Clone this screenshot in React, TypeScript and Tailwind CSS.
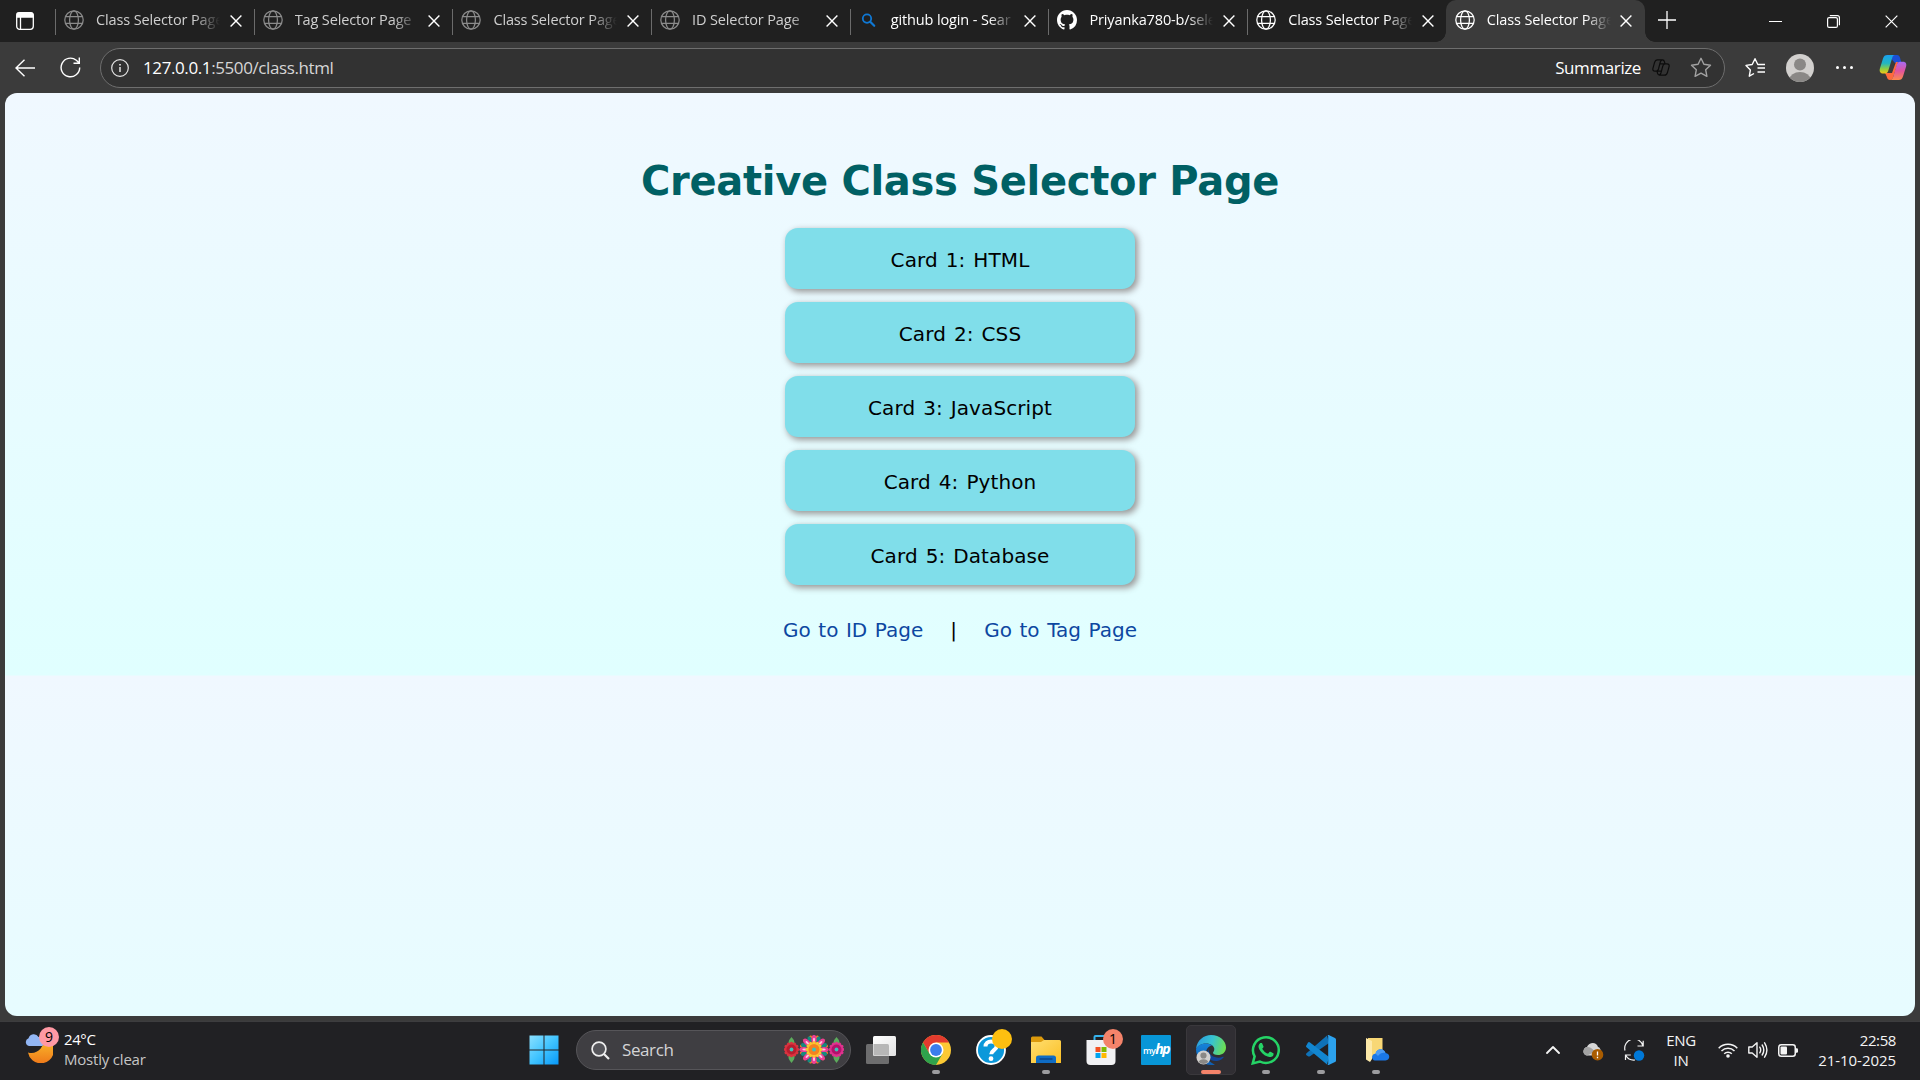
import React from "react";

const SEGOE = "font-['Open_Sans','Noto_Sans',sans-serif]";
const VERDANA = "font-['DejaVu_Sans',sans-serif]";

type IconProps = { className?: string };

const Globe = ({ className = "" }: IconProps) => (
  <svg width="20" height="20" viewBox="0 0 20 20" fill="none" stroke="currentColor" strokeWidth="1.25" className={className}>
    <circle cx="10" cy="10" r="9.2" />
    <ellipse cx="10" cy="10" rx="4.4" ry="9.2" />
    <path d="M1.6 6.6h16.8M1.6 13.4h16.8" />
  </svg>
);

const SearchBlue = () => (
  <svg width="20" height="20" viewBox="0 0 20 20" fill="none" stroke="#0f78d4" strokeLinecap="round">
    <circle cx="8" cy="8.6" r="4.2" strokeWidth="1.8" />
    <path d="M11.2 11.800l4 4" strokeWidth="2.2" />
  </svg>
);

const Github = () => (
  <svg width="20" height="20" viewBox="0 0 16 16" fill="#fff">
    <path d="M8 0C3.58 0 0 3.58 0 8c0 3.54 2.29 6.53 5.47 7.59.4.07.55-.17.55-.38 0-.19-.01-.82-.01-1.49-2.01.37-2.53-.49-2.69-.94-.09-.23-.48-.94-.82-1.13-.28-.15-.68-.52-.01-.53.63-.01 1.08.58 1.23.82.72 1.21 1.87.87 2.33.66.07-.52.28-.87.51-1.07-1.78-.2-3.64-.89-3.64-3.95 0-.87.31-1.59.82-2.15-.08-.2-.36-1.02.08-2.12 0 0 .67-.21 2.2.82.64-.18 1.32-.27 2-.27s1.36.09 2 .27c1.53-1.04 2.2-.82 2.2-.82.44 1.1.16 1.92.08 2.12.51.56.82 1.27.82 2.15 0 3.07-1.87 3.75-3.65 3.95.29.25.54.73.54 1.48 0 1.07-.01 1.93-.01 2.2 0 .21.15.46.55.38A8.01 8.01 0 0 0 16 8c0-4.42-3.58-8-8-8z" />
  </svg>
);

const Cross = ({ size = 12, w = 1.4 }: { size?: number; w?: number }) => (
  <svg width={size} height={size} viewBox="0 0 12 12" fill="none" stroke="#fff" strokeWidth={w}>
    <path d="M.6.6l10.8 10.8M11.4.6L.6 11.4" />
  </svg>
);

type TabInfo = { title: string; kind: "globe" | "search" | "github"; dim?: boolean; active?: boolean };

const tabs: TabInfo[] = [
  { title: "Class Selector Page", kind: "globe", dim: true },
  { title: "Tag Selector Page", kind: "globe", dim: true },
  { title: "Class Selector Page", kind: "globe", dim: true },
  { title: "ID Selector Page", kind: "globe", dim: true },
  { title: "github login - Sear", kind: "search" },
  { title: "Priyanka780-b/sele", kind: "github" },
  { title: "Class Selector Page", kind: "globe" },
  { title: "Class Selector Page", kind: "globe", active: true },
];

const Tab = ({ tab }: { tab: TabInfo }) => (
  <div
    className={`relative flex h-[42px] w-[198.700px] shrink-0 items-center ${tab.active ? "rounded-t-[10px] bg-[#3b3b3b]" : ""}`}
  >
    {!tab.active && <span className="absolute left-0 top-[9px] h-[26px] w-px bg-[#6b6b6b]" />}
    {tab.active && (
      <>
        <span className="absolute bottom-0 -left-[10px] size-[10px] bg-[radial-gradient(circle_at_0_0,transparent_9.5px,#3b3b3b_10px)]" />
        <span className="absolute bottom-0 -right-[10px] size-[10px] bg-[radial-gradient(circle_at_100%_0,transparent_9.5px,#3b3b3b_10px)]" />
      </>
    )}
    <span className="ml-[9px] -mt-[2px] w-5 shrink-0">
      {tab.kind === "globe" && <Globe className={tab.dim ? "text-[#8b8b8b]" : "text-white"} />}
      {tab.kind === "search" && <SearchBlue />}
      {tab.kind === "github" && <Github />}
    </span>
    <span
      className={`ml-[12px] -mt-[3px] w-[124px] overflow-hidden whitespace-nowrap text-[14.5px] leading-5 tracking-[-0.13px] [mask-image:linear-gradient(90deg,#000_98px,transparent_124px)] ${tab.dim ? "text-[#cfcfcf]" : "text-white"}`}
    >
      {tab.title}
    </span>
    <span className="ml-[9.5px]">
      <Cross />
    </span>
  </div>
);

const CopilotColor = () => (
  <svg width="28" height="27" viewBox="0 0 28 27">
    <defs>
      <linearGradient id="cpA" x1="0" y1="0" x2="0" y2="1">
        <stop offset="0" stopColor="#1aa0f0" />
        <stop offset=".45" stopColor="#22b6c0" />
        <stop offset=".75" stopColor="#8fce3f" />
        <stop offset="1" stopColor="#f5c516" />
      </linearGradient>
      <linearGradient id="cpB" x1="0" y1="0" x2="0" y2="1">
        <stop offset="0" stopColor="#a76bf5" />
        <stop offset=".5" stopColor="#e0539f" />
        <stop offset="1" stopColor="#ff8a4c" />
      </linearGradient>
    </defs>
    <path d="M9 1h9c2 0 2.600 1.500 3.200 3.500L22.500 9H16z" fill="#1b4fd6" />
    <path d="M6 19h7l4-11 2 0-4.500 14c-.8 2.600-1.600 4-3.500 4-2 0-2.800-1.500-3.300-3.500z" fill="#ff6a3c" />
    <path d="M8.500 1H16c-1.500 0-2.300 1.200-2.900 3.200L9.500 16c-.6 2-1.300 3.500-3.500 3.500H4C1 19.500.2 17 .9 14.500L4 4.500C4.800 2 6 1 8.500 1z" fill="url(#cpA)" />
    <path d="M19.500 26H11c1.700 0 2.600-1.200 3.200-3.200L17.700 11c.6-2 1.300-3.300 3.500-3.300H24c3 0 3.800 2.300 3.100 4.800L24 22.500c-.8 2.500-2 3.500-4.500 3.500z" fill="url(#cpB)" />
  </svg>
);

const Toolbar = () => (
  <div className="flex h-[51px] items-center bg-[#3b3b3b]">
    <svg className="ml-[15px]" width="20" height="18" viewBox="0 0 20 18" fill="none" stroke="#fff" strokeWidth="1.4">
      <path d="M9.500.8L1 9l8.500 8.200M1 9h19" />
    </svg>
    <svg className="ml-[24.500px]" width="21" height="21" viewBox="0 0 21 21" fill="none" stroke="#fff" strokeWidth="1.4">
      <path d="M19.700 10.500a9.300 9.300 0 1 1-3.400-7.200L19 5.800M19.300.5v5.700h-5.800" />
    </svg>
    <div className="ml-[19.500px] flex h-10 w-[1625px] items-center rounded-full border border-[#6e6e6e] bg-[#323232]">
      <svg className="ml-[10px]" width="18" height="18" viewBox="0 0 18 18" fill="none" stroke="#e4e4e4" strokeWidth="1.200">
        <circle cx="9" cy="9" r="8.300" />
        <path d="M9 8v5" strokeWidth="1.500" />
        <path d="M9 5v1.600" strokeWidth="1.700" />
      </svg>
      <span className="ml-[14px] whitespace-nowrap text-[17px] leading-6 tracking-[-0.4px] text-[#d6d6d6]">
        <span className="text-white">127.0.0.1</span>:5500/class.html
      </span>
      <span className="ml-auto text-[17px] leading-6 tracking-[-0.4px] text-white">Summarize</span>
      <svg className="ml-[11px]" width="18" height="17" viewBox="0 0 18 17" fill="none" stroke="#0c0c0c" strokeWidth="1.200">
        <path d="M5.500.8h5c1.400 0 1.700.8 2 2l.5 2h2c1.800 0 2.500 1.300 2 3l-1.500 5.500c-.5 1.800-1.300 2.900-3 2.900h-5c-1.400 0-1.700-.8-2-2l-.5-2H3c-1.800 0-2.500-1.300-2-3l1.500-5.500C3 1.900 3.800.8 5.500.8zM10.500.8c-1.400 0-1.800.9-2.200 2.200L6.500 10c-.4 1.300-.9 2.200-2.200 2.200M13 4.800c-1.400 0-1.900.9-2.200 2.200l-1.900 7c-.4 1.300-.9 2.200-2.200 2.200M8 4.800h5M5 12.200h5" />
      </svg>
      <svg className="ml-[20px] mr-[12px]" width="22" height="21" viewBox="0 0 22 21" fill="none" stroke="#a2a2a2" strokeWidth="1.400" strokeLinejoin="round">
        <path d="M11 1.300l2.900 6 6.600.9-4.800 4.600 1.200 6.500-5.900-3.100-5.900 3.100 1.200-6.500L1.500 8.200l6.600-.9z" />
      </svg>
    </div>
    <svg className="ml-[20px]" width="21" height="21" viewBox="0 0 21 21" fill="none" stroke="#fff" strokeWidth="1.400" strokeLinejoin="round">
      <path d="M9 16.500l-4.700 2.700 1.100-6.300L1 8.400l6.200-.9L10 1.700l2.800 5.800H20M12.500 11H20M12.500 15H20" />
    </svg>
    <svg className="ml-[20px]" width="28" height="28" viewBox="0 0 28 28">
      <defs>
        <clipPath id="avatar"><circle cx="14" cy="14" r="14" /></clipPath>
      </defs>
      <g clipPath="url(#avatar)">
        <rect width="28" height="28" fill="#d2d0ce" />
        <circle cx="14" cy="10.500" r="6" fill="#8a8886" />
        <ellipse cx="14" cy="25.500" rx="10.500" ry="7.500" fill="#8a8886" />
      </g>
    </svg>
    <span className="ml-[22px] flex gap-[4px]">
      <i className="size-[3px] rounded-full bg-white" />
      <i className="size-[3px] rounded-full bg-white" />
      <i className="size-[3px] rounded-full bg-white" />
    </span>
    <span className="ml-[26px]"><CopilotColor /></span>
  </div>
);

const cards = ["Card 1: HTML", "Card 2: CSS", "Card 3: JavaScript", "Card 4: Python", "Card 5: Database"];

const Page = () => (
  <div className={`mx-[5px] h-[923px] overflow-hidden rounded-xl bg-[linear-gradient(#f0f8ff,#e0ffff)] bg-[length:100%_582.500px] text-center ${VERDANA}`}>
    <h1 className="pt-[64px] text-[40px] font-bold leading-[49px] tracking-[-0.300px] text-[#006064]">Creative Class Selector Page</h1>
    <div className="mt-[22px] flex flex-col items-center gap-[13px]">
      {cards.map((c) => (
        <div key={c} className="flex h-[61px] w-[350px] items-center justify-center rounded-[13px] bg-[#80deea] pt-[2px] text-[20px] tracking-[0.100px] text-black [word-spacing:1.500px] shadow-[2.500px_2.500px_6px_#999]">
          {c}
        </div>
      ))}
    </div>
    <div className="mt-[33px] flex justify-center text-[20px] leading-6 text-[#0d47a1] [word-spacing:1.200px]">
      <a>Go to ID Page</a>
      <span className="w-[61px] text-black">|</span>
      <a>Go to Tag Page</a>
    </div>
  </div>
);

const Weather = () => (
  <div className="flex w-[528px] items-start">
    <div className="relative ml-[25px] mt-[13px] h-[30px] w-[34px]">
      <svg width="28" height="29" viewBox="0 0 28 29">
        <defs>
          <linearGradient id="moon" x1="0" y1="0" x2="0" y2="1">
            <stop offset="0" stopColor="#fbc02d" />
            <stop offset="1" stopColor="#ef7a1a" />
          </linearGradient>
        </defs>
        <path d="M20 4a13 13 0 1 1-17 14.500C12 21 19 14 19 4z" fill="url(#moon)" />
        <path d="M4 12a4 4 0 0 1-.5-7.700A5.500 5.500 0 0 1 13.500 3 4.600 4.600 0 0 1 17 12z" fill="#92b6f4" />
      </svg>
      <span className="absolute -top-[7px] left-[14px] flex size-5 items-center justify-center rounded-full bg-[#ff99a4] text-[14px] leading-none text-black">9</span>
    </div>
    <div className="ml-[5px] mt-[8px] text-[15px] leading-5">
      <div className="tracking-[-0.4px] text-white">24°C</div>
      <div className="tracking-[-0.200px] text-[#c6c6c6]">Mostly clear</div>
    </div>
  </div>
);

const petals = (n: number, cx: number, cy: number, r: number, rx: number, ry: number, fill: string, off = 0) =>
  Array.from({ length: n }, (_, i) => (
    <ellipse key={`${fill}${r}${i}`} cx={cx} cy={cy - r} rx={rx} ry={ry} fill={fill} transform={`rotate(${(360 / n) * i + off} ${cx} ${cy})`} />
  ));

const Flowers = () => (
  <svg width="60" height="30" viewBox="0 0 60 30">
    <path d="M7.500 2q5 5 2 11h-4q-3-6 2-11zM7.500 28q5-5 2-11h-4q-3 6 2 11zM52.500 2q5 5 2 11h-4q-3-6 2-11zM52.500 28q5-5 2-11h-4q-3 6 2 11z" fill="#5cab5c" />
    {petals(12, 7.5, 14.5, 5.2, 1.9, 2.600, "#d8333f")}
    <circle cx="7.500" cy="14.500" r="5" fill="#b71c2e" />
    {petals(12, 52.5, 14.5, 5.2, 1.9, 2.600, "#e0328f")}
    <circle cx="52.500" cy="14.500" r="5" fill="#b3126b" />
    {petals(12, 30, 14.5, 13, 1.500, 1.500, "#f47b20", 15)}
    {petals(8, 30, 14.5, 11, 2, 3, "#158a80", 22.5)}
    {petals(8, 30, 14.5, 10, 2.6, 4.600, "#ec3f96")}
    {petals(8, 30, 14.5, 9.500, 1, 2.200, "#ffc5df")}
    {petals(12, 30, 14.5, 5.800, 1.900, 2.700, "#fbc62f")}
    <circle cx="30" cy="14.500" r="5.500" fill="#f58220" />
    <circle cx="7.500" cy="14.500" r="1.900" fill="#3fc1b8" />
    <circle cx="30" cy="14.500" r="2" fill="#3fc1b8" />
    <circle cx="52.500" cy="14.500" r="1.900" fill="#3fc1b8" />
  </svg>
);

const Slot = ({ children, dot, active }: { children: React.ReactNode; dot?: boolean; active?: boolean }) => (
  <div className="relative flex h-full w-[55px] items-center justify-center">
    {active && <span className="absolute inset-x-[2.500px] top-[4px] h-[50px] rounded-[5px] border border-[#3a383c] bg-[#302e33]" />}
    <span className="relative -mt-[1px]">{children}</span>
    {dot && <span className="absolute bottom-[5px] h-[4px] w-2 rounded-full bg-[#9c9c9f]" />}
    {active && <span className="absolute bottom-[5px] h-[4px] w-5 rounded-full bg-[#f4836a]" />}
  </div>
);

const WinLogo = () => (
  <svg width="30" height="30" viewBox="0 0 30 30">
    <defs>
      <linearGradient id="win" x1="0" y1="0" x2="1" y2="1" gradientUnits="objectBoundingBox">
        <stop offset="0" stopColor="#8be0ff" />
        <stop offset=".5" stopColor="#41c4ff" />
        <stop offset="1" stopColor="#0798f8" />
      </linearGradient>
    </defs>
    <path d="M.5.5h14v14H.5zM15.500.5h14v14h-14zM.5 15.500h14v14H.5zM15.500 15.500h14v14h-14z" fill="url(#win)" />
  </svg>
);

const TaskView = () => (
  <svg width="30" height="28" viewBox="0 0 30 28">
    <defs>
      <linearGradient id="tv" x1="0" y1="0" x2="1" y2="1">
        <stop offset="0" stopColor="#fff" />
        <stop offset="1" stopColor="#e2e2e2" />
      </linearGradient>
    </defs>
    <rect x="0" y="8" width="23" height="20" rx="1.500" fill="#6d6d6e" />
    <rect x="7" y="0" width="23" height="20" rx="1.500" fill="url(#tv)" />
    <path d="M7.500 8H21.500q1.500 0 1.500 1.500V19.500H8.500q-1 0-1-1z" fill="#b7b7b7" />
  </svg>
);

const Chrome = () => (
  <svg width="30" height="30" viewBox="0 0 30 30">
    <circle cx="15" cy="15" r="15" fill="#fcc934" />
    <path d="M15 7.500H28A15 15 0 0 0 2 7.500L8.500 18.750z" fill="#e33b2e" />
    <path d="M2 7.500A15 15 0 0 0 15 30l6.500-11.250H8.500z" fill="#2fa24c" />
    <circle cx="15" cy="15" r="7.500" fill="#fff" />
    <circle cx="15" cy="15" r="5.900" fill="#3b7ded" />
  </svg>
);

const Help = () => (
  <span className="relative block">
    <svg width="30" height="30" viewBox="0 0 30 30">
      <circle cx="15" cy="15" r="14" fill="#0b98da" stroke="#fff" strokeWidth="1.800" />
      <path d="M9.500 11.500c0-3.500 2.500-5 5.500-5s5.700 1.600 5.700 4.500c0 4-5.500 4.200-5.500 8.300" fill="none" stroke="#fff" strokeWidth="4" />
      <circle cx="15" cy="23.700" r="2.400" fill="#fff" />
    </svg>
    <i className="absolute -right-[6px] -top-[6px] size-5 rounded-full bg-[#fdbf10]" />
  </span>
);

const Explorer = () => (
  <svg width="30" height="28" viewBox="0 0 30 28">
    <defs>
      <linearGradient id="fold" x1="0" y1="0" x2="1" y2="1">
        <stop offset="0" stopColor="#ffde70" />
        <stop offset="1" stopColor="#fbbf24" />
      </linearGradient>
    </defs>
    <path d="M0 2q0-1.500 1.500-1.500h9l3 3.500H28v8H0z" fill="#dc9a0c" />
    <path d="M0 6h10l3-2h15.500q1.500 0 1.500 1.500V27H0z" fill="url(#fold)" />
    <path d="M5 27v-5.500Q5 19.500 7.500 19.500h15q2.500 0 2.500 2.500v5z" fill="#0f6cc4" />
    <path d="M8.500 23h13" stroke="#0a3f80" strokeWidth="1.300" />
  </svg>
);

const Store = () => (
  <span className="relative block">
    <svg width="30" height="30" viewBox="0 0 30 30">
      <path d="M8.500 6V2q0-1 1-1h11q1 0 1 1v4" fill="none" stroke="#35b4ee" strokeWidth="2" />
      <path d="M.5 5h29v21q0 4-4 4h-21q-4 0-4-4z" fill="#f1f1f3" />
      <path d="M9.500 12h5v5h-5z" fill="#f25022" />
      <path d="M15.500 12h5v5h-5z" fill="#7fba00" />
      <path d="M9.500 18h5v5h-5z" fill="#00a4ef" />
      <path d="M15.500 18h5v5h-5z" fill="#ffb900" />
    </svg>
    <span className="absolute -right-[7px] -top-[6px] flex size-5 items-center justify-center rounded-full bg-[#f4836a] text-[14px] leading-none text-black">1</span>
  </span>
);

const MyHp = () => (
  <span className="flex size-[30px] items-center justify-center rounded-[1px] bg-[#0896d7] pb-[1px] leading-none text-white">
    <span className="pt-[2px] text-[9px] font-semibold tracking-[-0.600px]">my</span>
    <span className="text-[14px] font-bold italic tracking-[-1.500px]">hp</span>
  </span>
);

const Edge = () => (
  <svg width="30" height="30" viewBox="0 0 30 30">
    <defs>
      <linearGradient id="eg1" x1="0" y1=".4" x2="1" y2=".6">
        <stop offset="0" stopColor="#2a9ee0" />
        <stop offset=".5" stopColor="#38c3d0" />
        <stop offset="1" stopColor="#6fe04c" />
      </linearGradient>
      <linearGradient id="eg2" x1="0" y1="0" x2="0" y2="1">
        <stop offset="0" stopColor="#1583da" />
        <stop offset="1" stopColor="#0f5cb0" />
      </linearGradient>
    </defs>
    <path d="M0 14C1 5 8 0 15 0c9 0 15 6 15 12.500 0 5-4 7.500-8 7.500-3.500 0-5-1.300-5-2.300 0-.8 1.300-1.200 1.300-3.700C18.300 11 15 8.500 10 8.500 5 8.500 1.500 11 0 14z" fill="url(#eg1)" />
    <path d="M0 14C2 10 6 8.500 10 8.500c3 0 5 1 6 2-4 .5-6 4-6 7.500 0 5 4 10 9 11.500-1.200.4-2.500.5-4 .5C6.500 30 0 23 0 14z" fill="url(#eg2)" />
    <path d="M12.500 14c-4 7 2 13 8.500 12 3-.5 5.500-2 6.500-3.500.4-.6 0-1-.6-.7C21 24.500 12.500 21 12.500 14z" fill="#12469a" />
    <circle cx="7.500" cy="22.500" r="7" fill="#d2d0ce" />
    <circle cx="7.500" cy="20.500" r="3.100" fill="#8a8886" />
    <path d="M2.700 27a5 3.800 0 0 1 9.600 0 7 7 0 0 1-9.600 0z" fill="#8a8886" />
  </svg>
);

const WhatsApp = () => (
  <svg width="30" height="30" viewBox="0 0 24 24" fill="#25d366">
    <path d="M17.472 14.382c-.297-.149-1.758-.867-2.030-.967-.273-.099-.471-.148-.670.150-.197.297-.767.966-.940 1.164-.173.199-.347.223-.644.075-.297-.150-1.255-.463-2.390-1.475-.883-.788-1.480-1.761-1.653-2.059-.173-.297-.018-.458.130-.606.134-.133.298-.347.446-.520.149-.174.198-.298.298-.497.099-.198.050-.371-.025-.520-.075-.149-.669-1.612-.916-2.207-.242-.579-.487-.500-.669-.510-.173-.008-.371-.010-.570-.010-.198 0-.520.074-.792.372-.272.297-1.040 1.016-1.040 2.479 0 1.462 1.065 2.875 1.213 3.074.149.198 2.096 3.200 5.077 4.487.709.306 1.262.489 1.694.625.712.227 1.360.195 1.871.118.571-.085 1.758-.719 2.006-1.413.248-.694.248-1.289.173-1.413-.074-.124-.272-.198-.570-.347" />
    <path fill="none" stroke="#25d366" strokeWidth="2" d="M1.400 22.700l1.500-5.600a10.300 10.300 0 1 1 4.200 4.100z" />
  </svg>
);

const VsCode = () => (
  <svg width="30" height="30" viewBox="0 0 30 30">
    <path d="M.5 18.200q-1 1 0 2L2 21.300q1 .6 2-.1L23 8 21 .5z" fill="#0f72b8" />
    <path d="M.5 10.200q-1 1 0 2L21 29.500l2-7.500L4 7.500q-1-.8-2 0z" fill="#1286d0" />
    <path d="M21 .4q1-.8 2.200-.2l5.800 2.700q1 .5 1 1.700v20.800q0 1.200-1 1.700l-5.800 2.700q-1.200.6-2.200-.2 1.200.6 1.200-1V1.400Q22.200-.2 21 .4z" fill="#2ca2ee" />
  </svg>
);

const CloudFolder = () => (
  <svg className="ml-[3px]" width="26" height="26" viewBox="0 0 26 26">
    <path d="M3 1h14.500v20H3z" fill="#f8d775" />
    <path d="M1 1l6 3v18l-2 3-4-2.500z" fill="#fde9a9" />
    <path d="M10 23.500c-4-.5-4-6.500.5-6.800C11.500 11 19 10.500 20.500 16c5 .5 5 7 0 7.500z" fill="#1a78e8" />
    <path d="M10.500 16.500C12 11 19 11 20.500 16c-3-.8-5 0-7.500 3z" fill="#4a9bf5" />
  </svg>
);

const Tray = () => (
  <div className="ml-auto flex h-full items-center text-[#f4f4f4]">
    <svg width="14" height="10" viewBox="0 0 14 10" fill="none" stroke="#f4f4f4" strokeWidth="1.800" strokeLinecap="round" strokeLinejoin="round">
      <path d="M1 8l6-6 6 6" />
    </svg>
    <svg className="ml-[23px] mt-[3px]" width="21" height="19" viewBox="0 0 21 19">
      <path d="M4 13.500C-1.500 12.500 0 5.500 4 5 6 0 13.500-.5 15 5c4 1 3.500 8.500 0 8.500z" fill="#d6d6d6" />
      <path d="M4 5c3 0 5 1 8 5l-8 3.500C-1.500 12.500 0 5.500 4 5z" fill="#a3a3a3" />
      <circle cx="14.500" cy="12.700" r="5.800" fill="#a95c00" />
      <path d="M14.500 9.500v4M14.500 14.800v1.400" stroke="#fff" strokeWidth="1.300" />
    </svg>
    <svg className="ml-[20px]" width="21" height="21" viewBox="0 0 21 21" fill="none" stroke="#f4f4f4" strokeWidth="1.200">
      <path d="M1 10.500A9 9 0 0 1 19 6M19.200.8V6h-5.700M1.500 20v-5h5.300M1.700 15.200A9.500 9.500 0 0 0 11 20" />
      <circle cx="15" cy="15.500" r="5.200" fill="#0078d7" stroke="none" />
    </svg>
    <div className="ml-[18px] w-[36px] text-center text-[15px] leading-5 tracking-[-0.300px]">
      <div>ENG</div>
      <div>IN</div>
    </div>
    <svg className="ml-[19px]" width="20" height="16" viewBox="0 0 20 16" fill="none" stroke="#f4f4f4" strokeWidth="1.500">
      <path d="M.7 6.200a13 13 0 0 1 18.600 0M3.500 9a9.200 9.200 0 0 1 13 0M6.200 11.800a5.400 5.400 0 0 1 7.600 0" />
      <circle cx="10" cy="14" r="1.800" fill="#f4f4f4" stroke="none" />
    </svg>
    <svg className="ml-[10px]" width="20" height="18" viewBox="0 0 20 18" fill="none" stroke="#f4f4f4" strokeWidth="1.400" strokeLinejoin="round" strokeLinecap="round">
      <path d="M.8 6h3.400L9 1.800v14.400L4.200 12H.8zM11.800 6.200q1.800 2.800 0 5.600M14.200 4q3.200 5 0 10M16.600 1.800q4.600 7.200 0 14.400" />
    </svg>
    <svg className="ml-[10px]" width="20" height="13" viewBox="0 0 20 13">
      <rect x=".75" y=".75" width="16.500" height="11.500" rx="2.500" fill="none" stroke="#f4f4f4" strokeWidth="1.500" />
      <rect x="2.500" y="2.500" width="6.500" height="8" rx="1" fill="#f4f4f4" />
      <path d="M18 4.200h.8q1.200 0 1.200 1.200v2.200q0 1.200-1.200 1.200H18z" fill="#f4f4f4" />
    </svg>
    <div className="mr-6 w-[98px] whitespace-nowrap text-right text-[15px] leading-5">
      <div className="tracking-[-0.400px]">22:58</div>
      <div className="tracking-[-0.050px]">21-10-2025</div>
    </div>
  </div>
);

const Taskbar = () => (
  <div className="flex h-[59px] items-start border-t border-[#3d3d3f] bg-[#212124]">
    <div className="-mt-px flex h-[58px] w-full">
      <Weather />
      <div className="-ml-[11.500px] flex h-full items-center">
        <Slot><WinLogo /></Slot>
        <div className="ml-[4.500px] flex h-10 w-[275px] items-center rounded-full border border-[#565559] bg-[#3f3e42]">
          <svg className="ml-[14px]" width="19" height="19" viewBox="0 0 19 19" fill="#55555a" stroke="#eee" strokeWidth="1.700">
            <circle cx="8" cy="8" r="6.900" />
            <path d="M13 13l5 5" strokeWidth="2.200" />
          </svg>
          <span className="ml-[12px] text-[17px] tracking-[-0.4px] text-[#d4d4d6]">Search</span>
          <span className="ml-auto mr-[6px]"><Flowers /></span>
        </div>
        <div className="ml-[2.500px] flex h-full">
          <Slot><TaskView /></Slot>
          <Slot dot><Chrome /></Slot>
          <Slot><Help /></Slot>
          <Slot dot><Explorer /></Slot>
          <Slot><Store /></Slot>
          <Slot><MyHp /></Slot>
          <Slot active><Edge /></Slot>
          <Slot dot><WhatsApp /></Slot>
          <Slot dot><VsCode /></Slot>
          <Slot dot><CloudFolder /></Slot>
        </div>
      </div>
      <Tray />
    </div>
  </div>
);

export default function App() {
  return (
    <div className={`flex h-[1080px] w-[1920px] flex-col overflow-hidden bg-[#3b3b3b] ${SEGOE}`}>
      <div className="flex h-[42px] items-center bg-[#202020]">
        <svg className="ml-4 mr-[21px] shrink-0" width="18" height="18" viewBox="0 0 18 18" fill="none" stroke="#fff" strokeWidth="1.300">
          <rect x=".7" y=".7" width="16.600" height="16.600" rx="3" />
          <path d="M1 1.500Q1 1 3 1h12q2 0 2 1.500V5H1z" fill="#fff" />
          <path d="M4.500 5v12" />
        </svg>
        {tabs.map((t, i) => (
          <Tab key={i} tab={t} />
        ))}
        <svg className="ml-[13px] -mt-[3px]" width="18" height="18" viewBox="0 0 18 18" stroke="#fff" strokeWidth="1.300">
          <path d="M9 0v18M0 9h18" />
        </svg>
        <div className="ml-auto mr-[22px] flex items-center">
          <span className="h-px w-[13px] bg-white" />
          <svg className="ml-[45px] mt-px" width="13" height="13" viewBox="0 0 13 13" fill="none" stroke="#fff" strokeWidth="1.200">
            <rect x=".6" y="2.600" width="9.800" height="9.800" rx="1.500" />
            <path d="M2.800.6h7.600q2 0 2 2v7.600" />
          </svg>
          <span className="ml-[45px] mt-px"><Cross size={13} w={1.1} /></span>
        </div>
      </div>
      <Toolbar />
      <Page />
      <div className="h-[5px] shrink-0" />
      <Taskbar />
    </div>
  );
}
